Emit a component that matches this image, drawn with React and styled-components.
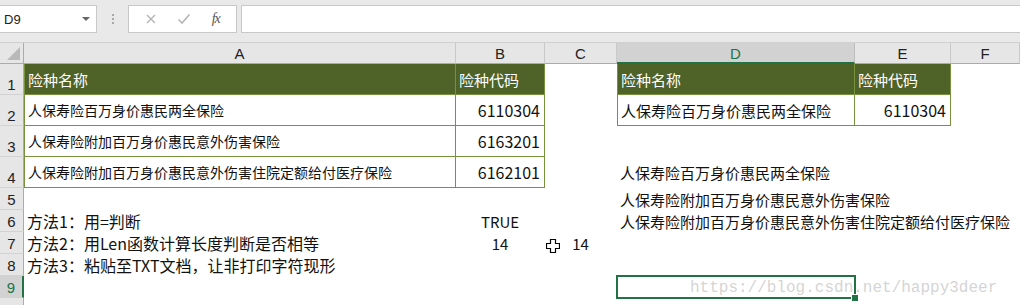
import React from "react";
import styled, { createGlobalStyle } from "styled-components";

const Global = createGlobalStyle`
  html, body { margin: 0; padding: 0; background: #fff; overflow: hidden; }
  body { font-family: "Noto Sans CJK SC", "Noto Sans", sans-serif; }
`;

const Page = styled.div`
  position: relative;
  width: 1020px;
  height: 305px;
  overflow: hidden;
  background: #fff;
`;

const Toolbar = styled.div`
  height: 43px;
  box-sizing: border-box;
  background: #e9e9e9;
  display: flex;
  align-items: flex-start;
  padding-top: 5px;
  border-bottom: 1px solid #d0d0d0;
`;

const NameBox = styled.div`
  width: 97px;
  height: 28px;
  box-sizing: border-box;
  background: #fff;
  border: 1px solid #c8c8c8;
  border-left: none;
  display: flex;
  align-items: center;
  justify-content: space-between;
  padding: 0 6px 0 4px;
  font-family: "Liberation Sans", sans-serif;
  font-size: 13px;
  color: #222;
`;

const Caret = styled.span`
  width: 0;
  height: 0;
  border-left: 4px solid transparent;
  border-right: 4px solid transparent;
  border-top: 4px solid #666;
`;

const Dots = styled.div`
  width: 31px;
  height: 28px;
  display: flex;
  flex-direction: column;
  align-items: center;
  justify-content: center;
  gap: 2px;
  span { width: 2px; height: 2px; background: #a8a8a8; }
`;

const FxBox = styled.div`
  width: 109px;
  height: 28px;
  box-sizing: border-box;
  background: #fff;
  border: 1px solid #c8c8c8;
  display: flex;
  align-items: center;
  justify-content: space-around;
  padding: 0 6px;
  color: #b0b0b0;
`;

const FxLabel = styled.span`
  font-family: "Liberation Serif", serif;
  font-style: italic;
  font-size: 14px;
  color: #555;
  letter-spacing: -1px;
`;

const Formula = styled.div`
  flex: 1;
  margin-left: 4px;
  height: 28px;
  box-sizing: border-box;
  background: #fff;
  border: 1px solid #c8c8c8;
  border-right: none;
`;

const Sheet = styled.div`
  display: grid;
  grid-template-columns: 24px 432px 89px 72px 238px 96px 1fr;
  grid-template-rows: 21px repeat(4, 31px) repeat(6, 22px);
`;

const ColHead = styled.div`
  box-sizing: border-box;
  background: ${(p) => (p.$sel ? "#d2d2d2" : "#e6e6e6")};
  color: ${(p) => (p.$sel ? "#217346" : "#222")};
  border-right: 1px solid ${(p) => (p.$sel ? "#bdbdbd" : "#c9c9c9")};
  border-bottom: ${(p) => (p.$sel ? "2px solid #217346" : "1px solid #ababab")};
  display: flex;
  align-items: center;
  justify-content: center;
  font-family: "Liberation Sans", sans-serif;
  font-size: 15px;
  padding-top: 1px;
`;

const Corner = styled(ColHead)`
  position: relative;
  border-right: 1px solid #ababab;
  &::after {
    content: "";
    position: absolute;
    right: 3px;
    bottom: 3px;
    width: 0;
    height: 0;
    border-left: 13px solid transparent;
    border-bottom: 13px solid #b9b9b9;
  }
`;

const RowHead = styled.div`
  box-sizing: border-box;
  background: ${(p) => (p.$sel ? "#d2d2d2" : "#e6e6e6")};
  color: ${(p) => (p.$sel ? "#217346" : "#222")};
  border-right: ${(p) => (p.$sel ? "2px solid #217346" : "1px solid #ababab")};
  border-bottom: 1px solid #d2d2d2;
  display: flex;
  align-items: flex-end;
  justify-content: center;
  padding-bottom: 1px;
  font-family: "Liberation Sans", sans-serif;
  font-size: 15px;
`;

const Cell = styled.div`
  position: relative;
  box-sizing: border-box;
  display: flex;
  align-items: center;
  justify-content: ${(p) =>
    p.$align === "right" ? "flex-end" : p.$align === "center" ? "center" : "flex-start"};
  padding: 0 4px 0 3px;
  white-space: nowrap;
  font-size: ${(p) => p.$size || 14}px;
  color: ${(p) => (p.$head ? "#fff" : "#111")};
  background: ${(p) => (p.$head ? "#4f6228" : "transparent")};
  border-right: ${(p) => (p.$box ? "1px solid #77933c" : "none")};
  border-bottom: ${(p) => (p.$box ? "1px solid #77933c" : "none")};
  border-left: ${(p) => (p.$l ? "1px solid #77933c" : "none")};
  outline: ${(p) => (p.$selected ? "2px solid #217346" : "none")};
  outline-offset: -1px;
`;

const Handle = styled.span`
  position: absolute;
  right: -4px;
  bottom: -4px;
  width: 6px;
  height: 6px;
  background: #217346;
  border: 1px solid #fff;
`;

const Cursor = styled.svg`
  position: absolute;
  left: 546px;
  top: 239px;
`;

const Watermark = styled.div`
  position: absolute;
  left: 690px;
  top: 279px;
  font-family: "Liberation Mono", monospace;
  font-size: 16px;
  color: rgba(175, 175, 175, 0.55);
  white-space: nowrap;
  pointer-events: none;
`;

const cols = ["A", "B", "C", "D", "E", "F"];

const T1 = [
  ["人保寿险百万身价惠民两全保险", "6110304"],
  ["人保寿险附加百万身价惠民意外伤害保险", "6163201"],
  ["人保寿险附加百万身价惠民意外伤害住院定额给付医疗保险", "6162101"],
];

export default function App() {
  const E = (k) => <Cell key={k} />;
  return (
    <Page>
      <Global />
      <Toolbar>
        <NameBox>
          D9
          <Caret />
        </NameBox>
        <Dots>
          <span />
          <span />
          <span />
        </Dots>
        <FxBox>
          <svg width="12" height="12" viewBox="0 0 12 12">
            <path d="M2 2L10 10M10 2L2 10" stroke="#b5b5b5" strokeWidth="1.4" />
          </svg>
          <svg width="14" height="12" viewBox="0 0 14 12">
            <path d="M1.5 6.5L5 10L12.5 1.5" stroke="#b5b5b5" strokeWidth="1.6" fill="none" />
          </svg>
          <FxLabel>fx</FxLabel>
        </FxBox>
        <Formula />
      </Toolbar>
      <Sheet>
        <Corner />
        {cols.map((c) => (
          <ColHead key={c} $sel={c === "D"}>
            {c}
          </ColHead>
        ))}

        <RowHead>1</RowHead>
        <Cell $head $box $l $size={15}>险种名称</Cell>
        <Cell $head $box $size={15}>险种代码</Cell>
        {E("1c")}
        <Cell $head $box $l $size={15}>险种名称</Cell>
        <Cell $head $box $size={15}>险种代码</Cell>
        {E("1f")}

        {T1.map(([name, code], i) => (
          <React.Fragment key={code}>
            <RowHead>{i + 2}</RowHead>
            <Cell $box $l>{name}</Cell>
            <Cell $box $size={16} $align="right">{code}</Cell>
            <Cell />
            {i === 0 ? (
              <>
                <Cell $box $l $size={15}>人保寿险百万身价惠民两全保险</Cell>
                <Cell $box $size={16} $align="right">6110304</Cell>
              </>
            ) : i === 2 ? (
              <>
                <Cell $size={15}>人保寿险百万身价惠民两全保险</Cell>
                <Cell />
              </>
            ) : (
              <>
                <Cell />
                <Cell />
              </>
            )}
            <Cell />
          </React.Fragment>
        ))}

        <RowHead>5</RowHead>
        {E("5a")}
        {E("5b")}
        {E("5c")}
        <Cell $size={15}>人保寿险附加百万身价惠民意外伤害保险</Cell>
        {E("5e")}
        {E("5f")}

        <RowHead>6</RowHead>
        <Cell $size={16}>方法1：用=判断</Cell>
        <Cell $size={15} $align="center">TRUE</Cell>
        {E("6c")}
        <Cell $size={15}>人保寿险附加百万身价惠民意外伤害住院定额给付医疗保险</Cell>
        {E("6e")}
        {E("6f")}

        <RowHead>7</RowHead>
        <Cell $size={16}>方法2：用Len函数计算长度判断是否相等</Cell>
        <Cell $size={15} $align="center">14</Cell>
        <Cell $size={15} $align="center">14</Cell>
        {E("7d")}
        {E("7e")}
        {E("7f")}

        <RowHead>8</RowHead>
        <Cell $size={16}>方法3：粘贴至TXT文档，让非打印字符现形</Cell>
        {E("8b")}
        {E("8c")}
        {E("8d")}
        {E("8e")}
        {E("8f")}

        <RowHead $sel>9</RowHead>
        {E("9a")}
        {E("9b")}
        {E("9c")}
        <Cell $selected>
          <Handle />
        </Cell>
        {E("9e")}
        {E("9f")}

        <RowHead />
        {E("10a")}
        {E("10b")}
        {E("10c")}
        {E("10d")}
        {E("10e")}
        {E("10f")}
      </Sheet>

      <Cursor width="14" height="14" viewBox="0 0 14 14">
        <path
          d="M4.5 0.5H9.5V4.5H13.5V9.5H9.5V13.5H4.5V9.5H0.5V4.5H4.5Z"
          fill="#fff"
          stroke="#000"
          strokeWidth="1.2"
        />
      </Cursor>
      <Watermark>https://blog.csdn.net/happy3deer</Watermark>
    </Page>
  );
}
